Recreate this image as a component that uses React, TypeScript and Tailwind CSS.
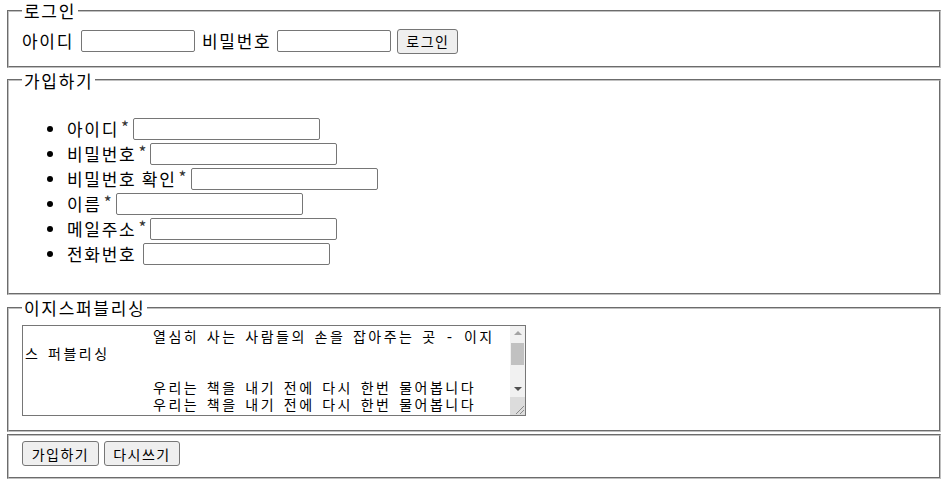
import React from "react";

const fs =
  "mx-[2px] min-w-0 border-2 [border-style:groove] border-[#c0c0c0] px-[13px] pt-[5.6px] pb-[10px]";
const legend = "px-[2px] leading-[21px] tracking-[1.7px]";
const inputSm =
  "h-[22px] w-[114px] rounded-[2px] border border-[#767676] bg-white px-[2px] text-[13px] outline-none";
const inputLg =
  "h-[22px] w-[187px] rounded-[2px] border border-[#767676] bg-white px-[2px] text-[13px] outline-none";
const btn =
  "h-[25px] rounded-[3px] border border-[#767676] bg-[#efefef] text-[14px] leading-[16px] tracking-[1.5px] text-black text-center";

const textValue =
  "\t\t열심히 사는 사람들의 손을 잡아주는 곳 - 이지스 퍼블리싱\n\n" +
  Array.from({ length: 10 })
    .map(() => "\t\t우리는 책을 내기 전에 다시 한번 물어봅니다")
    .join("\n");

function Item({ label, required }: { label: string; required?: boolean }) {
  return (
    <li className="flex h-[25px] items-center">
      <span className="ml-[25px] mr-[14px] h-[6px] w-[6px] rounded-full bg-black" />
      <span className="tracking-[1.7px]">{label}</span>
      {required ? (
        <>
          <span className="-mt-[3px] w-[12px] text-center text-[17px] leading-[20px] text-[#333]">*</span>
          <input className={`ml-[2px] ${inputLg}`} />
        </>
      ) : (
        <input className={`ml-[7px] ${inputLg}`} />
      )}
    </li>
  );
}

function FakeScrollbar() {
  return (
    <div className="pointer-events-none absolute right-[1px] top-[1px] flex h-[89px] w-[15px] flex-col bg-[#f1f1f1]">
      <div className="flex h-[15px] items-center justify-center">
        <span className="h-0 w-0 border-x-[4px] border-b-[4px] border-x-transparent border-b-[#a3a3a3]" />
      </div>
      <div className="h-[40px] px-[1px] pt-[2px]">
        <div className="h-[22px] w-full bg-[#c1c1c1]" />
      </div>
      <div className="flex h-[16px] items-center justify-center">
        <span className="h-0 w-0 border-x-[4px] border-t-[4px] border-x-transparent border-t-[#505050]" />
      </div>
      <div className="relative h-[18px] bg-[#dcdcdc]">
        <svg className="absolute bottom-[1px] right-[1px]" width="10" height="10" viewBox="0 0 10 10">
          <line x1="10" y1="2" x2="2" y2="10" stroke="#8a8a8a" strokeWidth="1" />
          <line x1="10" y1="6" x2="6" y2="10" stroke="#8a8a8a" strokeWidth="1" />
        </svg>
      </div>
    </div>
  );
}

export default function App() {
  return (
    <div className="min-h-[494px] bg-white pl-[5px] pr-[8px] font-['Noto_Sans_CJK_KR',sans-serif] text-[17px] text-black">
      <div className="flex flex-col gap-[2px]">
        <fieldset className={fs}>
          <legend className={legend}>로그인</legend>
          <div className="flex h-[29px] items-center">
            <span className="tracking-[1.7px]">아이디</span>
            <input className={`ml-[7px] ${inputSm}`} />
            <span className="ml-[7px] tracking-[1.7px]">비밀번호</span>
            <input type="password" className={`ml-[6px] ${inputSm}`} />
            <button className={`ml-[6px] w-[61px] ${btn}`}>로그인</button>
          </div>
        </fieldset>

        <fieldset className={fs}>
          <legend className={legend}>가입하기</legend>
          <ul className="mb-[17px] mt-[20px]">
            <Item label="아이디" required />
            <Item label="비밀번호" required />
            <Item label="비밀번호 확인" required />
            <Item label="이름" required />
            <Item label="메일주소" required />
            <Item label="전화번호" />
          </ul>
        </fieldset>

        <fieldset className={fs}>
          <legend className={legend}>이지스퍼블리싱</legend>
          <div className="relative mb-[4px] mt-[1px] h-[91px] w-[504px]">
            <textarea
              defaultValue={textValue}
              className="block h-[91px] w-[504px] resize-none overflow-y-auto [scrollbar-width:none] border border-[#767676] bg-white pb-0 pt-[4px] pl-[2px] pr-[22px] font-['Liberation_Mono','Noto_Sans_CJK_KR',monospace] text-[14px] leading-[17px] tracking-[2.5px] [word-spacing:-3.2px] [tab-size:64px] text-black outline-none"
            />
            <FakeScrollbar />
          </div>
        </fieldset>

        <fieldset className={fs}>
          <div className="flex h-[26px] items-start">
            <button className={`w-[77px] ${btn}`}>가입하기</button>
            <button className={`ml-[5px] w-[76px] ${btn}`}>다시쓰기</button>
          </div>
        </fieldset>
      </div>
    </div>
  );
}
